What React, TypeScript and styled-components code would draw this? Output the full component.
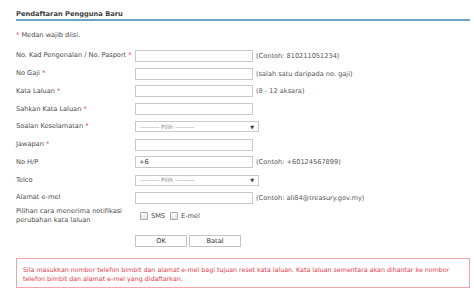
import React from 'react'
import styled, { createGlobalStyle } from 'styled-components'

const GlobalStyle = createGlobalStyle`
  html, body {
    margin: 0;
    padding: 0;
    background: #ffffff;
  }
  body {
    font-family: "DejaVu Sans", Verdana, sans-serif;
    font-size: 6.6px;
    color: #4a4a4a;
  }
`

const Page = styled.div`
  padding: 0 4px 0 16px;
  width: 474px;
  box-sizing: border-box;
`

const Title = styled.div`
  height: 21px;
  box-sizing: border-box;
  padding-top: 9px;
  font-size: 6.7px;
  font-weight: 700;
  line-height: 10px;
  color: #3d3d3d;
  border-bottom: 2px solid #6aa3c8;
`

const Note = styled.div`
  margin-top: 9px;
  line-height: 10px;
`

const Star = styled.span`
  color: #e0474c;
`

const Form = styled.div`
  margin-top: 7px;
  display: flex;
  flex-direction: column;
`

const Row = styled.div<{ tall?: boolean }>`
  display: grid;
  grid-template-columns: 119px auto 1fr;
  align-items: center;
  height: ${({ tall }) => (tall ? '18px' : '17.75px')};
`

const Label = styled.div`
  line-height: 9px;
  white-space: pre-line;
`

const Field = styled.div`
  width: 118px;
  height: 12px;
  box-sizing: border-box;
  border: 1px solid #c9c9c9;
  background: #fff;
  padding-left: 3px;
  line-height: 10px;
  color: #333;
`

const Select = styled.div`
  width: 124px;
  height: 11px;
  box-sizing: border-box;
  border: 1px solid #c9c9c9;
  background: #fff;
  padding: 0 4px;
  display: flex;
  align-items: center;
  justify-content: space-between;
  color: #8a8a8a;
  font-size: 5.9px;
`

const Arrow = styled.span`
  color: #333;
  font-size: 5px;
`

const Hint = styled.div`
  padding-left: 3px;
  color: #555;
  white-space: nowrap;
`

const Checks = styled.div`
  display: flex;
  align-items: center;
  gap: 5px;
  padding-left: 5px;
`

const Check = styled.label`
  display: flex;
  align-items: center;
  gap: 3px;
`

const Box = styled.span`
  width: 8px;
  height: 8px;
  box-sizing: border-box;
  border: 1px solid #a9a9a9;
  border-radius: 1px;
  background: linear-gradient(#fafafa, #e4e4e4);
`

const Buttons = styled.div`
  margin-top: 10px;
  padding-left: 119px;
  display: flex;
  gap: 2px;
`

const Button = styled.button`
  width: 52px;
  height: 12px;
  box-sizing: border-box;
  border: 1px solid #c4c4c4;
  background: #fff;
  font-family: inherit;
  font-size: 6.6px;
  color: #333;
  padding: 0;
  line-height: 10px;
`

const Alert = styled.div`
  margin-top: 11px;
  height: 30px;
  box-sizing: border-box;
  border: 1px solid #f2a4aa;
  padding: 6px 6px 0;
  line-height: 9.2px;
  font-size: 6.32px;
  white-space: nowrap;
  color: #e2394a;
`

type FieldRow = {
  label: string
  required?: boolean
  kind: 'input' | 'select'
  value?: string
  hint?: string
}

const rows: FieldRow[] = [
  { label: 'No. Kad Pengenalan / No. Pasport', required: true, kind: 'input', hint: '(Contoh: 810211051234)' },
  { label: 'No Gaji', required: true, kind: 'input', hint: '(salah satu daripada no. gaji)' },
  { label: 'Kata Laluan', required: true, kind: 'input', hint: '(8 - 12 aksara)' },
  { label: 'Sahkan Kata Laluan', required: true, kind: 'input' },
  { label: 'Soalan Keselamatan', required: true, kind: 'select' },
  { label: 'Jawapan', required: true, kind: 'input' },
  { label: 'No H/P', kind: 'input', value: '+6', hint: '(Contoh: +60124567899)' },
  { label: 'Telco', kind: 'select' },
  { label: 'Alamat e-mel', kind: 'input', hint: '(Contoh: ali84@treasury.gov.my)' },
]

const App: React.FC = () => {
  return (
    <Page>
      <GlobalStyle />
      <Title>Pendaftaran Pengguna Baru</Title>
      <Note>
        <Star>*</Star> Medan wajib diisi.
      </Note>
      <Form>
        {rows.map((r) => (
          <Row key={r.label}>
            <Label>
              {r.label}
              {r.required ? <Star> *</Star> : null}
            </Label>
            {r.kind === 'input' ? (
              <Field>{r.value}</Field>
            ) : (
              <Select>
                <span>--------- Pilih ---------</span>
                <Arrow>▼</Arrow>
              </Select>
            )}
            {r.hint ? <Hint>{r.hint}</Hint> : <span />}
          </Row>
        ))}
        <Row tall>
          <Label>{'Pilihan cara menerima notifikasi\nperubahan kata laluan'}</Label>
          <Checks>
            <Check>
              <Box />
              SMS
            </Check>
            <Check>
              <Box />
              E-mel
            </Check>
          </Checks>
          <span />
        </Row>
      </Form>
      <Buttons>
        <Button>OK</Button>
        <Button>Batal</Button>
      </Buttons>
      <Alert>
        Sila masukkan nombor telefon bimbit dan alamat e-mel bagi tujuan reset kata laluan. Kata laluan sementara akan dihantar ke nombor
        <br />
        telefon bimbit dan alamat e-mel yang didaftarkan.
      </Alert>
    </Page>
  )
}

export default App
